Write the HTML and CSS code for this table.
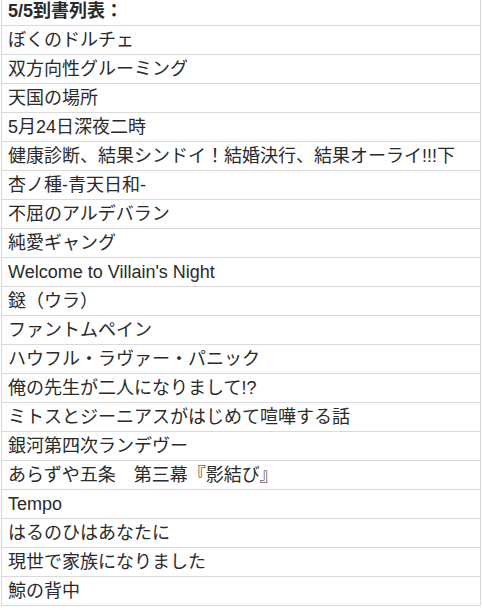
FILE: index.html
```html
<!DOCTYPE html>
<html lang="ja">
<head>
<meta charset="utf-8">
<title>5/5到書列表</title>
<link rel="stylesheet" href="styles.css">
</head>
<body>
<div class="sheet">
  <div class="row head">5/5到書列表：</div>
  <div class="row">ぼくのドルチェ</div>
  <div class="row">双方向性グルーミング</div>
  <div class="row">天国の場所</div>
  <div class="row">5月24日深夜二時</div>
  <div class="row">健康診断、結果シンドイ！結婚決行、結果オーライ!!!下</div>
  <div class="row">杏ノ種-青天日和-</div>
  <div class="row">不屈のアルデバラン</div>
  <div class="row">純愛ギャング</div>
  <div class="row">Welcome to Villain's Night</div>
  <div class="row">鎹（ウラ）</div>
  <div class="row">ファントムペイン</div>
  <div class="row">ハウフル・ラヴァー・パニック</div>
  <div class="row">俺の先生が二人になりまして!?</div>
  <div class="row">ミトスとジーニアスがはじめて喧嘩する話</div>
  <div class="row">銀河第四次ランデヴー</div>
  <div class="row">あらずや五条　第三幕『影結び』</div>
  <div class="row">Tempo</div>
  <div class="row">はるのひはあなたに</div>
  <div class="row">現世で家族になりました</div>
  <div class="row">鯨の背中</div>
</div>
</body>
</html>
```

FILE: styles.css
```css
html, body {
  margin: 0;
  padding: 0;
  background: #fff;
}

body {
  font-family: "Liberation Sans", Arial, "Noto Sans CJK JP", sans-serif;
  font-size: 18px;
  color: #2a2a2a;
  overflow: hidden;
}

.sheet {
  box-sizing: border-box;
  width: 480px;
  margin: -4px 0 0 1px;
  border-left: 1px solid #dadada;
  border-right: 1px solid #dadada;
  border-top: 1px solid #dadada;
}

.row {
  box-sizing: border-box;
  height: 29px;
  padding: 1px 0 0 6px;
  line-height: 27px;
  border-bottom: 1px solid #dadada;
  white-space: nowrap;
  overflow: hidden;
}

.head {
  font-weight: bold;
}
```
